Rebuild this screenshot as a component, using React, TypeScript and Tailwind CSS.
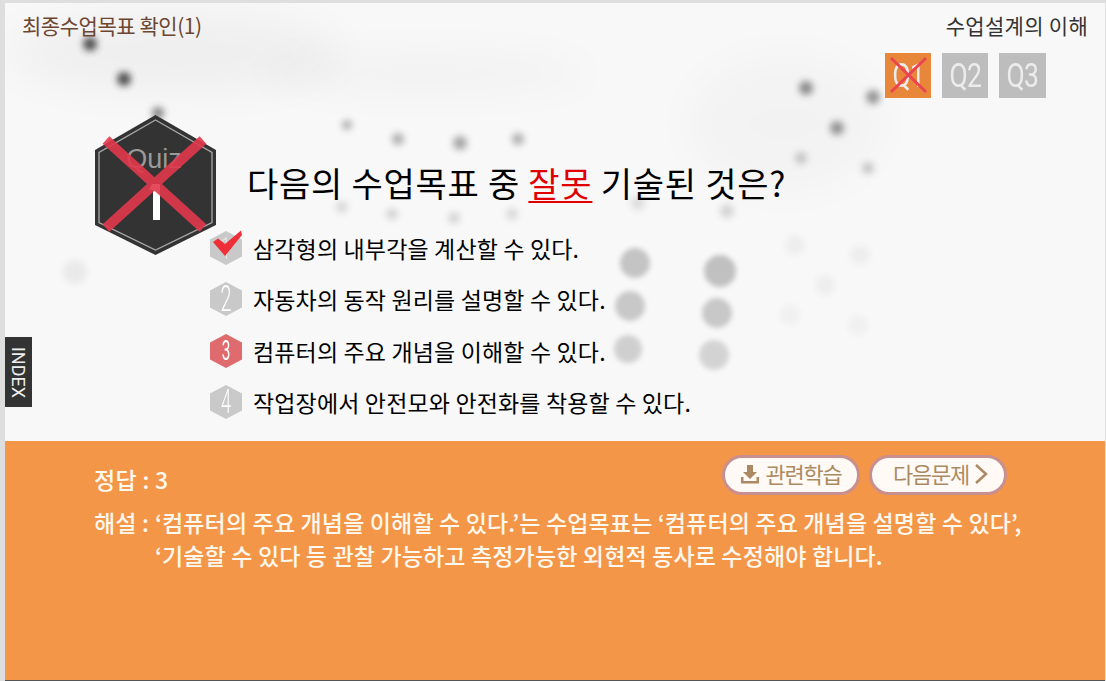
import type { ReactNode } from "react";

const font = { fontFamily: '"Noto Sans CJK KR", "Noto Sans", sans-serif' };

const blobs = [
  { x: 90, y: 44, r: 7, o: 0.85, s: 5 },
  { x: 124, y: 79, r: 7, o: 0.85, s: 5 },
  { x: 158, y: 113, r: 6, o: 0.6, s: 5 },
  { x: 347, y: 125, r: 5, o: 0.38, s: 4 },
  { x: 398, y: 139, r: 6, o: 0.38, s: 4 },
  { x: 460, y: 143, r: 7, o: 0.42, s: 4 },
  { x: 518, y: 139, r: 6, o: 0.38, s: 4 },
  { x: 342, y: 207, r: 6, o: 0.16, s: 5 },
  { x: 392, y: 214, r: 6, o: 0.18, s: 5 },
  { x: 454, y: 218, r: 6, o: 0.18, s: 5 },
  { x: 512, y: 214, r: 6, o: 0.16, s: 5 },
  { x: 638, y: 203, r: 7, o: 0.14, s: 4 },
  { x: 727, y: 211, r: 7, o: 0.18, s: 4 },
  { x: 635, y: 263, r: 15, o: 0.26, s: 2.500 },
  { x: 720, y: 271, r: 16, o: 0.28, s: 2.500 },
  { x: 630, y: 306, r: 15, o: 0.24, s: 2.500 },
  { x: 717, y: 313, r: 15, o: 0.24, s: 2.500 },
  { x: 628, y: 349, r: 14, o: 0.2, s: 2.500 },
  { x: 714, y: 355, r: 15, o: 0.18, s: 2.500 },
  { x: 806, y: 88, r: 7, o: 0.55, s: 5 },
  { x: 873, y: 97, r: 7, o: 0.5, s: 5 },
  { x: 837, y: 128, r: 7, o: 0.5, s: 5 },
  { x: 801, y: 158, r: 6, o: 0.25, s: 5 },
  { x: 868, y: 168, r: 6, o: 0.25, s: 5 },
  { x: 75, y: 272, r: 12, o: 0.07, s: 7 },
  { x: 795, y: 245, r: 10, o: 0.05, s: 6 },
  { x: 860, y: 255, r: 10, o: 0.05, s: 6 },
  { x: 825, y: 285, r: 10, o: 0.05, s: 6 },
  { x: 858, y: 325, r: 10, o: 0.04, s: 6 },
  { x: 790, y: 315, r: 10, o: 0.04, s: 6 },
];

const options = [
  { num: "1", text: "삼각형의 내부각을 계산할 수 있다.", checked: true, digit: "text-[32px] font-light text-[#e4e4e4]" },
  { num: "2", text: "자동차의 동작 원리를 설명할 수 있다.", digit: "text-[36px] font-light text-white" },
  { num: "3", text: "컴퓨터의 주요 개념을 이해할 수 있다.", answer: true, digit: "text-[28px] font-normal text-white" },
  { num: "4", text: "작업장에서 안전모와 안전화를 착용할 수 있다.", digit: "text-[33px] font-light text-white" },
];

function Backdrop() {
  return (
    <svg className="absolute inset-0 h-full w-full" viewBox="0 0 1100 438" preserveAspectRatio="none" aria-hidden="true">
      <defs>
        <filter id="haze" x="-100%" y="-300%" width="300%" height="700%">
          <feGaussianBlur stdDeviation="22" />
        </filter>
        <filter id="soft2" x="-100%" y="-100%" width="300%" height="300%">
          <feGaussianBlur stdDeviation="2.500" />
        </filter>
        <filter id="soft4" x="-100%" y="-100%" width="300%" height="300%">
          <feGaussianBlur stdDeviation="3.500" />
        </filter>
      </defs>
      <ellipse cx="170" cy="50" rx="170" ry="40" fill="#000" opacity="0.035" filter="url(#haze)" />
      <ellipse cx="420" cy="70" rx="170" ry="18" fill="#000" opacity="0.03" filter="url(#haze)" />
      <ellipse cx="780" cy="120" rx="100" ry="70" fill="#000" opacity="0.02" filter="url(#haze)" />
      {blobs.map((b) => (
        <circle
          key={`${b.x}-${b.y}`}
          cx={b.x - 5}
          cy={b.y - 3}
          r={b.r}
          fill="#333"
          opacity={b.o}
          filter={b.s < 3 ? "url(#soft2)" : "url(#soft4)"}
        />
      ))}
    </svg>
  );
}

function QuizBadge() {
  return (
    <svg className="shrink-0" width="124" height="142" viewBox="0 0 124 142">
      <polygon points="61.500,1 122,36 122,111 61.500,141 1,111 1,36" fill="#333333" />
      <polygon points="61.500,6 118,38.500 118,108.500 61.500,136 5,108.500 5,38.500" fill="none" stroke="#a8a8a8" strokeWidth="1.300" />
      <text x="60" y="54" textAnchor="middle" fontSize="27" fill="#9a9a9a" fontFamily="Liberation Sans, sans-serif">
        Quiz
      </text>
      <path d="M58 70 H66 V106 H59 V76 L55 76 Z" fill="#fff" />
      <path d="M12 26 L109 114 M109 26 L12 114" stroke="#e1374b" strokeOpacity="0.9" strokeWidth="10" />
    </svg>
  );
}

function NumberHex({ num, checked, answer, digit }: { num: string; checked?: boolean; answer?: boolean; digit: string }) {
  return (
    <div className="relative h-[36px] w-[36px] shrink-0">
      <svg className="absolute inset-0" width="36" height="36" viewBox="0 0 36 36">
        <polygon points="17,1 33,9.500 33,26.500 17,35 1,26.500 1,9.500" fill={answer ? "#df6b6f" : "#c9c9c9"} />
      </svg>
      <span
        className={`absolute inset-y-0 left-0 flex w-[34px] scale-x-[.55] items-center justify-center leading-[36px] ${digit}`}
        style={{ fontFamily: "Roboto, sans-serif" }}
      >
        {num}
      </span>
      {checked && (
        <svg className="absolute inset-0" width="36" height="36" viewBox="0 0 36 36">
          <path d="M4 12 L9 8.500 L16 14 L32 0.500 L33 5 L16 26 Z" fill="#ee2f38" />
        </svg>
      )}
    </div>
  );
}

function QTab({ label, active, wide }: { label: string; active?: boolean; wide?: boolean }) {
  return (
    <div className={`relative flex h-[45px] items-center justify-center text-[#ececec] ${wide ? "w-[47px]" : "w-[46px]"} ${active ? "bg-[#e8873a]" : "bg-[#bdbdbd]"}`}>
      <span className="scale-x-[.78] text-[34px] font-normal tracking-[-1px]" style={{ fontFamily: "Roboto, sans-serif" }}>
        {label}
      </span>
      {active && (
        <svg className="absolute inset-0" width="46" height="45" viewBox="0 0 46 45">
          <path d="M6 5 L41 39 M41 5 L6 39" stroke="#ec4350" strokeWidth="3" />
        </svg>
      )}
    </div>
  );
}

function PillButton({ children }: { children: ReactNode }) {
  return (
    <button className="flex h-[40px] w-[138px] items-center justify-center gap-[5px] rounded-full border-[3px] border-[#c98f8f] bg-[#fffaf5] pb-[3px] text-[22px] tracking-[-1.2px] text-[#ab8a63]">
      {children}
    </button>
  );
}

export default function App() {
  return (
    <div className="flex h-[681px] w-[1106px] flex-col overflow-hidden bg-[#dedede] pl-[5px] pr-px pt-[3px]" style={font}>
      <div className="relative flex h-[438px] flex-col bg-[#f8f8f8]">
        <Backdrop />
        <div className="relative flex items-start justify-between pl-[17px] pr-[17px] pt-[7px]">
          <span className="text-[21px] leading-[30px] tracking-[-0.45px] text-[#6d4632]">최종수업목표 확인(1)</span>
          <span className="text-[21px] leading-[30px] tracking-[0.3px] text-[#333]">수업설계의 이해</span>
        </div>
        <div className="relative mr-[59px] mt-[13px] flex justify-end gap-[11px]">
          <QTab label="Q1" active />
          <QTab label="Q2" />
          <QTab label="Q3" wide />
        </div>
        <div className="relative ml-[89px] mt-[16px] flex items-start">
          <QuizBadge />
          <h1 className="ml-[29px] mt-[44px] whitespace-nowrap text-[34px] leading-[50px] tracking-[0.75px] text-black">
            다음의 수업목표 중 <span className="text-[#e00000] underline decoration-2 underline-offset-4">잘못</span> 기술된 것은?
          </h1>
        </div>
        <ul className="absolute left-[204px] top-[226.500px] flex flex-col gap-[15.500px]">
          {options.map((o) => (
            <li key={o.num} className="flex h-[36px] items-center gap-[8px]">
              <NumberHex num={o.num} checked={o.checked} answer={o.answer} digit={o.digit} />
              <span className="text-[23px] leading-[36px] tracking-[0.15px] text-black">{o.text}</span>
            </li>
          ))}
        </ul>
        <div className="absolute left-0 top-[334px] flex h-[70px] w-[27px] items-center justify-center bg-[#333]">
          <span className="rotate-90 text-[18px] font-normal text-[#eee]" style={{ fontFamily: "Roboto, sans-serif" }}>
            INDEX
          </span>
        </div>
      </div>
      <div className="flex-1 border-b border-[#555] bg-[#f49648] px-[89px] pt-[13px] text-[#fff8ee]">
        <div className="flex h-[42px] items-center justify-between pr-[9px]">
          <span className="mt-[8px] text-[23px] font-medium leading-[40px] tracking-[0.3px]">정답 : 3</span>
          <div className="flex gap-[9px]">
            <PillButton>
              <svg width="20" height="20" viewBox="0 0 20 20" fill="currentColor">
                <path d="M7 1 H13 V8 H17 L10 15 L3 8 H7 Z" />
                <path d="M1 13 H3.500 V17 H16.500 V13 H19 V19.500 H1 Z" />
              </svg>
              관련학습
            </PillButton>
            <PillButton>
              <span className="pl-[5px]">다음문제</span>
              <svg width="14" height="22" viewBox="0 0 14 22" fill="none" stroke="currentColor" strokeWidth="2.500">
                <path d="M2 2 L12 11 L2 20" />
              </svg>
            </PillButton>
          </div>
        </div>
        <div className="mt-[10px] flex text-[23px] font-medium leading-[33px] tracking-[0.15px]">
          <span className="w-[61px] shrink-0 whitespace-nowrap">해설 :</span>
          <p className="whitespace-nowrap">
            ‘컴퓨터의 주요 개념을 이해할 수 있다.’는 수업목표는 ‘컴퓨터의 주요 개념을 설명할 수 있다’,
            <br />
            ‘기술할 수 있다 등 관찰 가능하고 측정가능한 외현적 동사로 수정해야 합니다.
          </p>
        </div>
      </div>
    </div>
  );
}
